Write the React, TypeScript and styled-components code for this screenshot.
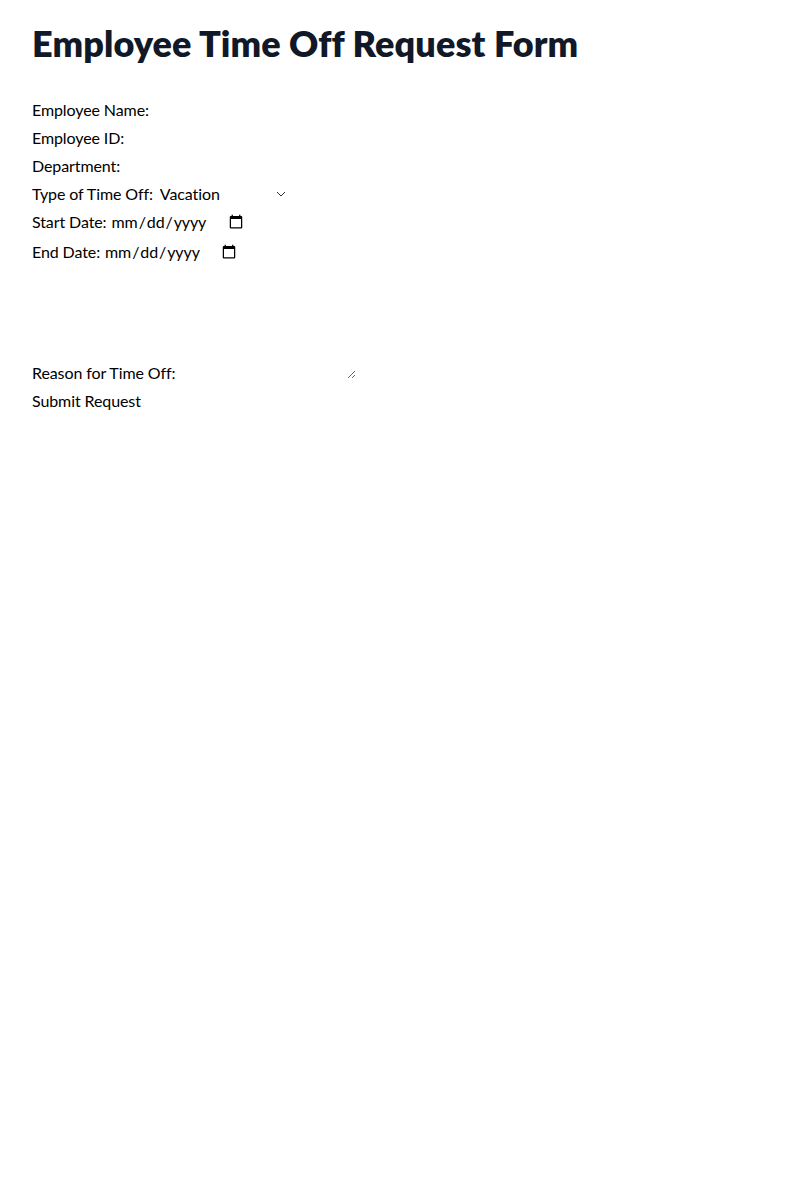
import React from "react";
import styled, { createGlobalStyle } from "styled-components";

const Global = createGlobalStyle`
  *, *::before, *::after { box-sizing: border-box; border-width: 0; border-style: solid; }
  html, body { margin: 0; padding: 0; background: #fff; }
  body { font-family: Lato, "Noto Sans", sans-serif; line-height: 1.5; color: #000; }
  h1 { margin: 0; }
  input, select, textarea, button {
    font-family: inherit; font-size: 100%; line-height: inherit; color: inherit;
    letter-spacing: inherit; margin: 0; padding: 0; background: transparent;
  }
`;

const Page = styled.div`
  padding: 23px 32px;
`;

const Title = styled.h1`
  font-size: 36px;
  line-height: 40px;
  font-weight: 800;
  color: #111827;
  letter-spacing: 0.1px;
  font-variant-ligatures: none;
  margin-bottom: 35px;
`;

const Form = styled.form`
  display: flex;
  flex-direction: column;
  gap: 4px;
  font-size: 16px;
  letter-spacing: -0.1px;
`;

const Field = styled.div<{ $flex?: boolean }>`
  display: ${(p) => (p.$flex ? "flex" : "block")};
  align-items: center;
  height: ${(p) => (p.$flex ? "24px" : "auto")};
`;

const Label = styled.label`
  margin-right: 4px;
`;

const TextInput = styled.input``;

const SelectWrap = styled.span`
  position: relative;
  display: inline-flex;
  height: 24px;
`;

const Select = styled.select`
  appearance: none;
  -webkit-appearance: none;
  width: 136px;
  height: 24px;
  padding-left: 3px;
`;

const Chevron = styled.svg`
  position: absolute;
  right: 7px;
  top: 50%;
  width: 10px;
  height: 6px;
  margin-top: -3px;
  pointer-events: none;
`;

const DateInput = styled.input`
  width: 135px;
  margin-top: -1px;
  margin-bottom: 1px;
`;

const TextArea = styled.textarea`
  resize: both;
  width: 177px;
  height: 109px;
  vertical-align: baseline;
`;

const Submit = styled.button`
  align-self: flex-start;
  cursor: pointer;
`;

export default function App() {
  return (
    <>
      <Global />
      <Page>
        <Title>Employee Time Off Request Form</Title>
        <Form onSubmit={(e) => e.preventDefault()}>
          <Field>
            <Label htmlFor="name">Employee Name:</Label>
            <TextInput id="name" type="text" />
          </Field>
          <Field>
            <Label htmlFor="eid">Employee ID:</Label>
            <TextInput id="eid" type="text" />
          </Field>
          <Field>
            <Label htmlFor="dept">Department:</Label>
            <TextInput id="dept" type="text" />
          </Field>
          <Field $flex>
            <Label htmlFor="type">Type of Time Off:</Label>
            <SelectWrap>
              <Select id="type" defaultValue="vacation">
                <option value="vacation">Vacation</option>
                <option value="sick">Sick Leave</option>
                <option value="personal">Personal Day</option>
              </Select>
              <Chevron viewBox="0 0 10 6" fill="none">
                <path d="M1 1l4 4 4-4" stroke="#333" strokeWidth="1" />
              </Chevron>
            </SelectWrap>
          </Field>
          <Field>
            <Label htmlFor="start">Start Date:</Label>
            <DateInput id="start" type="date" />
          </Field>
          <Field>
            <Label htmlFor="end">End Date:</Label>
            <DateInput id="end" type="date" />
          </Field>
          <Field>
            <Label htmlFor="reason">Reason for Time Off:</Label>
            <TextArea id="reason" />
          </Field>
          <Submit type="submit">Submit Request</Submit>
        </Form>
      </Page>
    </>
  );
}
